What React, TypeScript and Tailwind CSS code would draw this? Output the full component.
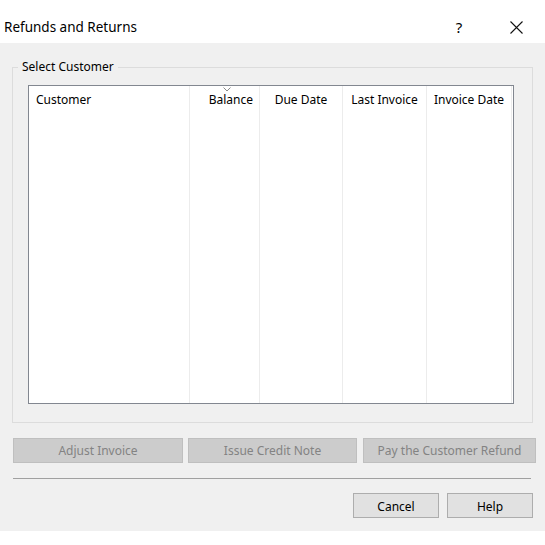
export default function App() {
  const cols = [
    { label: 'Customer', w: 'w-[161px]', align: 'justify-start pl-[7px]' },
    { label: 'Balance', w: 'w-[70px]', align: 'justify-end pr-[6px]', sorted: true },
    { label: 'Due Date', w: 'w-[83px]', align: 'justify-center' },
    { label: 'Last Invoice', w: 'w-[84px]', align: 'justify-center' },
    { label: 'Invoice Date', w: 'w-[85px]', align: 'justify-center' },
  ]

  return (
    <div className="w-[545px] h-[545px] bg-white flex flex-col text-black" style={{ fontFamily: '"Noto Sans", "Open Sans", sans-serif' }}>
      {/* title bar */}
      <div className="h-[43px] pt-[12px] flex items-center shrink-0">
        <div className="pl-[4px] text-[13.5px] text-black">Refunds and Returns</div>
        <div className="ml-auto w-[22px] text-center text-[15px] mr-[40px]">?</div>
        <svg width="13" height="13" viewBox="0 0 13 13" className="mr-[22px]">
          <path d="M0.5 0.5 L12.5 12.5 M12.5 0.5 L0.5 12.5" stroke="#111" strokeWidth="1.1" />
        </svg>
      </div>

      {/* body */}
      <div className="bg-[#f0f0f0] h-[488px] shrink-0 flex flex-col text-[12px]">
        <div className="relative mt-[24px] mx-[12px] h-[356px] border border-[#dcdcdc] pt-[17px] pl-[15px] pr-[18px] pb-[18px] flex">
          <div className="absolute -top-[9px] left-[5px] px-[4px] bg-[#f0f0f0] text-[12px] leading-[16px]">Select Customer</div>
          <div className="flex-1 border border-[#828790] bg-white flex">
            {cols.map(c => (
              <div key={c.label} className={`${c.w} h-full border-r border-[#ececec] flex flex-col`}>
                <div className={`relative h-[26px] pt-[2px] flex items-center ${c.align}`}>
                  {c.sorted && (
                    <svg width="8" height="5" viewBox="0 0 8 5" className="absolute left-[33px] top-[1px]">
                      <path d="M0.5 0.5 L4 4 L7.5 0.5" stroke="#8a8a8a" strokeWidth="1" fill="none" />
                    </svg>
                  )}
                  <span>{c.label}</span>
                </div>
              </div>
            ))}
            <div className="flex-1" />
          </div>
        </div>

        {/* action buttons */}
        <div className="mt-[15px] ml-[13px] h-[25px] flex text-[#838383]">
          <div className="w-[170px] h-full pt-[1px] bg-[#cccccc] border border-[#bfbfbf] flex items-center justify-center">Adjust Invoice</div>
          <div className="w-[169px] h-full pt-[1px] ml-[5px] bg-[#cccccc] border border-[#bfbfbf] flex items-center justify-center">Issue Credit Note</div>
          <div className="w-[173px] h-full pt-[1px] ml-[6px] bg-[#cccccc] border border-[#bfbfbf] flex items-center justify-center">Pay the Customer Refund</div>
        </div>

        <div className="mt-[15px] ml-[13px] mr-[14px] h-px bg-[#a0a0a0]" />

        <div className="mt-[14px] h-[25px] flex justify-end pr-[12px] gap-[8px]">
          <div className="w-[86px] h-full pt-[2px] bg-[#e1e1e1] border border-[#adadad] flex items-center justify-center">Cancel</div>
          <div className="w-[86px] h-full pt-[2px] bg-[#e1e1e1] border border-[#adadad] flex items-center justify-center">Help</div>
        </div>
      </div>
    </div>
  )
}
